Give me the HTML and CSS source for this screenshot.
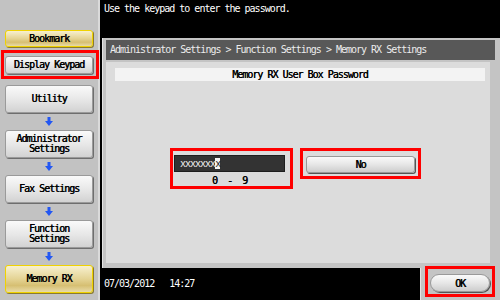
FILE: index.html
```
<!DOCTYPE html>
<html lang="en">

<head>
    <meta charset="UTF-8">
    <title>Memory RX Settings</title>
    <link rel="stylesheet" href="styles.css">
</head>

<body>
    <div class="screen">
        <!-- left menu -->
        <div class="side">
            <div class="side-btn yellow bookmark">Bookmark</div>
            <div class="mark keypad-mark">
                <div class="side-btn keypad">Display Keypad</div>
            </div>
            <div class="side-btn first">Utility</div>
            <div class="arrow"><svg width="8" height="9" viewBox="0 0 8 9"><rect x="2.5" y="0" width="3" height="4" fill="#2357f2"/><polygon points="0,4 8,4 4,9" fill="#2357f2"/></svg></div>
            <div class="side-btn">Administrator<br>Settings</div>
            <div class="arrow"><svg width="8" height="9" viewBox="0 0 8 9"><rect x="2.5" y="0" width="3" height="4" fill="#2357f2"/><polygon points="0,4 8,4 4,9" fill="#2357f2"/></svg></div>
            <div class="side-btn">Fax Settings</div>
            <div class="arrow"><svg width="8" height="9" viewBox="0 0 8 9"><rect x="2.5" y="0" width="3" height="4" fill="#2357f2"/><polygon points="0,4 8,4 4,9" fill="#2357f2"/></svg></div>
            <div class="side-btn">Function<br>Settings</div>
            <div class="arrow"><svg width="8" height="9" viewBox="0 0 8 9"><rect x="2.5" y="0" width="3" height="4" fill="#2357f2"/><polygon points="0,4 8,4 4,9" fill="#2357f2"/></svg></div>
            <div class="side-btn yellow">Memory RX</div>
        </div>

        <div class="main">
            <div class="msg">Use the keypad to enter the password.</div>
            <div class="panel">
                <div class="crumb">Administrator Settings &gt; Function Settings &gt; Memory RX Settings</div>
                <div class="body">
                    <div class="sub">Memory RX User Box Password</div>
                    <div class="entry">
                        <div class="mark pass-mark">
                            <div class="pass">xxxxxxx<span class="cursor">x</span></div>
                            <div class="range">0  -  9</div>
                        </div>
                        <div class="mark no-mark">
                            <div class="btn no">No</div>
                        </div>
                    </div>
                </div>
            </div>
            <div class="foot">
                <div class="date">07/03/2012   14:27</div>
                <div class="ok-tab">
                    <div class="mark ok-mark">
                        <div class="btn ok">OK</div>
                    </div>
                </div>
            </div>
        </div>
    </div>
</body>

</html>
```

FILE: styles.css
```
* {
    box-sizing: border-box;
    margin: 0px;
    padding: 0px;
}

body {
    background: #000;
    font-family: "DejaVu Sans Mono", "Liberation Mono", monospace;
    font-size: 10px;
    letter-spacing: -1px;
}

.screen {
    display: flex;
    width: 500px;
    height: 300px;
    overflow: hidden;
}

/* 左侧菜单 */
.side {
    width: 100px;
    background: #c2c2c2;
    border-right: 2px solid #dadada;
    padding: 30px 5px 0px 5px;
    display: flex;
    flex-direction: column;
}

.side-btn {
    height: 28px;
    display: flex;
    align-items: center;
    justify-content: center;
    text-align: center;
    line-height: 10px;
    color: #000;
    /* 半粗体效果 */
    text-shadow: 0.4px 0px 0px #000;
    background: linear-gradient(#fafafa, #e6e6e6 55%, #d2d2d2);
    border: 1px solid #9a9a9a;
    border-radius: 3px;
    box-shadow: 1px 1px 0px #6e6e6e;
}

.side-btn.first {
    margin-top: 6px;
}

.bookmark {
    height: 17px;
}

.yellow {
    background: linear-gradient(#f7f0cf, #e4d394 50%, #d6bf72 75%, #e8dba8);
    border: 1px solid #f0d200;
    box-shadow: 1px 1px 0px #8a7a30;
}

.keypad {
    height: 18px;
}

.arrow {
    height: 17px;
    display: flex;
    align-items: center;
    justify-content: center;
}

/* 红色标注框 */
.mark {
    border: 3px solid #f00;
}

.keypad-mark {
    margin: 3px -6px 0px -4px;
    padding: 3px 3px 2px 1px;
}

.main {
    flex: 1;
    display: flex;
    flex-direction: column;
}

.msg {
    height: 38px;
    color: #fff;
    padding: 3px 4px;
    line-height: 12px;
}

.panel {
    height: 230px;
    margin-left: 2px;
    background: #c4c4c4;
    border-left: 1px solid #e4e4e4;
    padding: 2px 5px 5px 3px;
    display: flex;
    flex-direction: column;
}

.crumb {
    height: 20px;
    line-height: 20px;
    background: #585858;
    color: #ececec;
    padding-left: 4px;
    white-space: nowrap;
}

.body {
    flex: 1;
    margin: 2px 5px 0px 0px;
    background: #dcdcdc;
    padding: 6px 5px 0px 9px;
}

.sub {
    height: 13px;
    line-height: 13px;
    background: #f3f3f3;
    text-align: center;
    color: #000;
    text-shadow: 0.3px 0px 0px #000;
}

.entry {
    display: flex;
    align-items: flex-start;
    gap: 7px;
    margin: 67px 0px 0px 55px;
}

.pass-mark {
    width: 123px;
    padding: 4px 5px 0px 1px;
}

.pass {
    height: 17px;
    line-height: 15px;
    background: #333;
    border: 1px solid #1e1e1e;
    color: #eee;
    padding-left: 5px;
}

.cursor {
    background: #f4f4f4;
    color: #222;
}

.range {
    margin-top: 3px;
    line-height: 11px;
    text-align: center;
    white-space: pre;
    color: #000;
    text-shadow: 0.4px 0px 0px #000;
}

.no-mark {
    width: 121px;
    padding: 5px 3px 3px 3px;
}

.btn {
    display: flex;
    align-items: center;
    justify-content: center;
    color: #000;
    text-shadow: 0.5px 0px 0px #000;
    background: linear-gradient(#fafafa, #e4e4e4 55%, #cdcdcd);
    border: 1px solid #999;
    box-shadow: 1px 1px 0px #555;
}

.no {
    height: 17px;
    border-radius: 3px;
}

.foot {
    height: 32px;
    display: flex;
    justify-content: space-between;
}

.date {
    color: #fff;
    padding: 10px 0px 0px 4px;
    line-height: 12px;
    white-space: pre;
}

.ok-tab {
    width: 80px;
    background: #c4c4c4;
    border-left: 1px solid #e6e6e6;
    padding: 0px 5px 0px 4px;
}

.ok-mark {
    margin-top: -2px;
    padding: 5px 2px 2px 2px;
}

.ok {
    height: 18px;
    border-radius: 9px;
}
```
